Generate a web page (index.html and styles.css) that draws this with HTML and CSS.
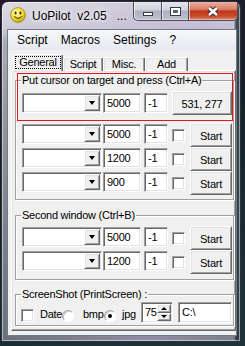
FILE: index.html
```html
<!DOCTYPE html>
<html lang="en">
<head>
  <meta charset="UTF-8">
  <meta name="viewport" content="width=device-width, initial-scale=1.0">
  <title>UoPilot v2.05</title>
  <link rel="stylesheet" href="styles.css">
</head>
<body>
  <div class="window">
    <!-- title bar -->
    <div class="titlebar">
      <svg class="app-icon" viewBox="0 0 16 16">
        <defs>
          <radialGradient id="face" cx="40%" cy="35%" r="65%">
            <stop offset="0" stop-color="#fffbb8"/>
            <stop offset=".6" stop-color="#f4de36"/>
            <stop offset="1" stop-color="#c6a400"/>
          </radialGradient>
        </defs>
        <circle cx="8" cy="8" r="7.4" fill="url(#face)" stroke="#a08810" stroke-width=".8"/>
        <ellipse cx="5.6" cy="6" rx="1" ry="1.4" fill="#222"/>
        <ellipse cx="10.4" cy="6" rx="1" ry="1.4" fill="#222"/>
        <path d="M4.2 9.4 Q8 13.2 11.8 9.4" fill="none" stroke="#222" stroke-width="1"/>
      </svg>
      <span class="title">UoPilot  v2.05   ...</span>
      <div class="caption">
        <span class="cbtn cbtn-min"><i></i></span>
        <span class="cbtn cbtn-max"><i></i></span>
        <span class="cbtn cbtn-close">
          <svg width="14" height="11" viewBox="0 0 14 11">
            <path d="M3 2 L11 9 M11 2 L3 9" stroke="#4a2620" stroke-width="4.6" fill="none"/>
            <path d="M3 2 L11 9 M11 2 L3 9" stroke="#fff" stroke-width="2.6" fill="none"/>
          </svg>
        </span>
      </div>
    </div>

    <div class="client">
      <div class="menubar">
        <span class="menu-item">Script</span>
        <span class="menu-item">Macros</span>
        <span class="menu-item">Settings</span>
        <span class="menu-item">?</span>
      </div>

      <div class="tabs">
        <span class="tab tab-active" style="width: 50px"><span class="focus">General</span></span>
        <span class="tab" style="width: 40px">Script</span>
        <span class="tab" style="width: 42px">Misc.</span>
        <span class="tab" style="width: 43px">Add</span>
      </div>

      <div class="panel">
        <div class="mark"></div>

        <fieldset class="group group-main">
          <legend>Put cursor on target and press (Ctrl+A)</legend>
          <div class="row row-target">
            <div class="combo sunken"><span class="drop raised"><b></b></span></div>
            <div class="edit sunken edit-time">5000</div>
            <div class="edit sunken edit-num">-1</div>
            <div class="btn raised btn-coords">531, 277</div>
          </div>
          <div class="row">
            <div class="combo sunken"><span class="drop raised"><b></b></span></div>
            <div class="edit sunken edit-time">5000</div>
            <div class="edit sunken edit-num">-1</div>
            <div class="check sunken"></div>
            <div class="btn raised btn-start">Start</div>
          </div>
          <div class="row">
            <div class="combo sunken"><span class="drop raised"><b></b></span></div>
            <div class="edit sunken edit-time">1200</div>
            <div class="edit sunken edit-num">-1</div>
            <div class="check sunken"></div>
            <div class="btn raised btn-start">Start</div>
          </div>
          <div class="row">
            <div class="combo sunken"><span class="drop raised"><b></b></span></div>
            <div class="edit sunken edit-time">900</div>
            <div class="edit sunken edit-num">-1</div>
            <div class="check sunken"></div>
            <div class="btn raised btn-start">Start</div>
          </div>
        </fieldset>

        <fieldset class="group group-second">
          <legend>Second window (Ctrl+B)</legend>
          <div class="row">
            <div class="combo sunken"><span class="drop raised"><b></b></span></div>
            <div class="edit sunken edit-time">5000</div>
            <div class="edit sunken edit-num">-1</div>
            <div class="check sunken"></div>
            <div class="btn raised btn-start">Start</div>
          </div>
          <div class="row">
            <div class="combo sunken"><span class="drop raised"><b></b></span></div>
            <div class="edit sunken edit-time">1200</div>
            <div class="edit sunken edit-num">-1</div>
            <div class="check sunken"></div>
            <div class="btn raised btn-start">Start</div>
          </div>
        </fieldset>

        <fieldset class="group group-shot">
          <legend>ScreenShot (PrintScreen) :</legend>
          <div class="shot-row">
            <div class="check sunken shot-check"></div>
            <span class="opt opt-date">Date</span>
            <span class="radio"></span>
            <span class="opt opt-bmp">bmp</span>
            <span class="radio radio-on"></span>
            <span class="opt opt-jpg">jpg</span>
            <div class="spin sunken">
              <span class="spin-value">75</span>
              <span class="updown">
                <span class="raised arrow-up"><b></b></span>
                <span class="raised arrow-down"><b></b></span>
              </span>
            </div>
            <div class="edit sunken edit-path">C:\</div>
          </div>
        </fieldset>
      </div>
    </div>
  </div>
</body>
</html>
```

FILE: styles.css
```css
* {
  box-sizing: border-box;
}

body {
  margin: 0;
  width: 245px;
  height: 346px;
  overflow: hidden;
  background: linear-gradient(160deg, #24182c 0%, #14222a 45%, #1e343a 100%);
  font-family: "Liberation Sans", Arial, sans-serif;
}

/* window frame (aero glass) */
.window {
  display: flex;
  flex-direction: column;
  width: 240px;
  height: 341px;
  margin: 1px 0 0 1px;
  padding: 0 4px 6px 6px;
  border: 1px solid #2b3038;
  border-radius: 7px 7px 0 0;
  background:
    linear-gradient(to right, transparent 232px, rgba(28, 44, 50, .8) 234px),
    linear-gradient(100deg, rgba(218, 218, 225, 0) 0%, rgba(190, 176, 210, .55) 70%, rgba(200, 192, 214, .3) 100%),
    linear-gradient(#dcdbe3 0, #d0ccd9 26px, #a9aab4 40px, #8c9199 130px, #59646c 100%);
  box-shadow: inset 0 0 0 1px rgba(255, 255, 255, .5);
}

.titlebar {
  display: flex;
  align-items: flex-start;
  height: 28px;
  flex: none;
}

.app-icon {
  width: 16px;
  height: 16px;
  margin: 5px 0 0 2px;
}

.title {
  margin: 6px 0 0 6px;
  font-size: 12px;
  line-height: 16px;
  color: #000;
  white-space: pre;
  text-shadow: 0 0 4px #fff, 0 0 8px #fff;
}

.caption {
  display: flex;
  height: 19px;
  margin: 0 -2px 0 auto;
}

.cbtn {
  display: flex;
  align-items: center;
  justify-content: center;
  height: 19px;
  border: 1px solid #474d5a;
  border-top: none;
  border-left: none;
  box-shadow: inset 1px 0 0 rgba(255, 255, 255, .6), inset 0 -1px 0 rgba(255, 255, 255, .4);
}

.cbtn-min {
  width: 29px;
  border-left: 1px solid #474d5a;
  border-radius: 0 0 0 5px;
  background: linear-gradient(#e6e6ec, #cfd0da 45%, #aeb0bf 50%, #c0c2cf 100%);
}

.cbtn-max {
  width: 27px;
  background: linear-gradient(#e6e6ec, #cfd0da 45%, #aeb0bf 50%, #c0c2cf 100%);
}

.cbtn-close {
  width: 49px;
  border-radius: 0 0 5px 0;
  background: linear-gradient(#eab0a2, #d87a63 42%, #c23518 50%, #c94a2c 78%, #e0896a 100%);
}

.cbtn-min i {
  width: 10px;
  height: 4px;
  margin-top: 5px;
  background: #fff;
  border: 1px solid #343a48;
}

.cbtn-max i {
  width: 11px;
  height: 9px;
  border: 1px solid #343a48;
  background: #5d6373;
  box-shadow: inset 0 0 0 2px #fff;
}

/* client area */
.client {
  flex: 1;
  display: flex;
  flex-direction: column;
  background: #f0f0f0;
  box-shadow: 0 0 0 1px #6f7a88;
  font-size: 11px;
  letter-spacing: -.25px;
  color: #000;
}

.menubar {
  display: flex;
  height: 20px;
  padding: 1px 0 0 2.5px;
  background: linear-gradient(#f7f8fb, #e6e9f0);
  letter-spacing: 0;
}

.menu-item {
  padding: 0 6.5px;
  font-size: 12px;
  line-height: 19px;
}

/* tabs */
.tabs {
  position: relative;
  z-index: 1;
  display: flex;
  align-items: flex-end;
  height: 17px;
  margin: 4px 0 -1px 5px;
}

.tab {
  height: 14px;
  border: 1px solid #fff;
  border-right-color: #696969;
  border-bottom: none;
  border-radius: 2px 2px 0 0;
  box-shadow: inset -1px 0 0 #a0a0a0, inset 1px 1px 0 #e3e3e3;
  line-height: 12px;
  text-align: center;
}

.tab-active {
  height: 17px;
  padding-top: 1px;
  background: #f0f0f0;
}

.focus {
  display: block;
  height: 13px;
  margin: 0 1px;
  border: 1px dotted #000;
  line-height: 11px;
}

.panel {
  position: relative;
  flex: 1;
  margin: 0 0 4px 3px;
  padding: 3px 1px 0 3px;
  border: 1px solid;
  border-color: #fff #696969 #696969 #fff;
  box-shadow: inset -1px -1px 0 #a0a0a0, inset 1px 1px 0 #e3e3e3;
}

/* red marker around the first row */
.mark {
  position: absolute;
  left: 5px;
  top: 2px;
  width: 216px;
  height: 48px;
  border: 1px solid #e3151b;
}

.group {
  margin: 0;
  min-width: 0;
  padding: 4px 1px 4px 6px;
  border: 1px solid #a0a0a0;
  box-shadow: 1px 1px 0 #fff, inset 1px 1px 0 #fff;
}

.group legend {
  margin-left: -1px;
  padding: 0 1px;
  line-height: 13px;
  background: #f0f0f0;
}

.group-second {
  margin-top: 9px;
  padding-bottom: 5px;
}

.group-shot {
  margin-top: 8px;
  padding-top: 1px;
  padding-bottom: 2px;
}

/* 3d edges */
.sunken {
  background: #fff;
  border: 1px solid;
  border-color: #a0a0a0 #fff #fff #a0a0a0;
  box-shadow: inset 1px 1px 0 #696969, inset -1px -1px 0 #e3e3e3;
}

.raised {
  background: #f0f0f0;
  border: 1px solid;
  border-color: #fff #696969 #696969 #fff;
  box-shadow: inset 1px 1px 0 #e3e3e3, inset -1px -1px 0 #a0a0a0;
}

/* rows */
.row {
  display: flex;
  align-items: flex-start;
  height: 24px;
}

.row-target {
  margin-bottom: 8px;
}

.combo {
  display: flex;
  justify-content: flex-end;
  width: 80px;
  height: 20px;
  margin-top: 1px;
  padding: 1px;
}

.row-target .combo,
.row-target .edit {
  margin-top: 2px;
}

.drop {
  display: flex;
  align-items: center;
  justify-content: center;
  width: 16px;
  height: 16px;
}

.drop b {
  border-left: 3.5px solid transparent;
  border-right: 3.5px solid transparent;
  border-top: 4px solid #000;
}

.edit {
  height: 20px;
  margin-top: 1px;
  padding: 2px 0 0 3px;
  line-height: 14px;
  white-space: nowrap;
}

.edit-time {
  width: 38px;
  margin-left: 1px;
}

.edit-num {
  width: 24px;
  margin-left: 3px;
}

.check {
  width: 13px;
  height: 13px;
  margin: 6px 0 0 4px;
}

.btn {
  display: flex;
  align-items: center;
  justify-content: center;
  height: 24px;
  padding-top: 2px;
  white-space: nowrap;
}

.btn-coords {
  width: 60px;
  margin-left: 4px;
}

.btn-start {
  width: 42px;
  margin-left: 5px;
}

/* screenshot row */
.shot-row {
  display: flex;
  align-items: flex-end;
  height: 21px;
}

.shot-check {
  margin: 0 0 1px -1px;
}

.opt {
  line-height: 13px;
  margin-bottom: 2px;
  white-space: nowrap;
}

.opt-date {
  width: 22px;
  margin-left: 6px;
}

.opt-bmp {
  width: 21px;
  margin-left: 9px;
}

.opt-jpg {
  width: 16px;
  margin-left: 6px;
}

.radio {
  display: flex;
  align-items: center;
  justify-content: center;
  width: 12px;
  height: 12px;
  margin-bottom: 1px;
  border-radius: 50%;
  border: 1px solid;
  border-color: #a8a8a8 #fff #fff #a8a8a8;
  background: #fff;
  box-shadow: inset 1px 1px 0 #c8c8c8;
}

.radio-on::after {
  content: "";
  width: 4px;
  height: 4px;
  border-radius: 50%;
  background: #000;
}

.spin {
  display: flex;
  justify-content: space-between;
  width: 32px;
  height: 21px;
  margin-left: 3px;
  padding: 1px 1px 1px 0;
}

.spin-value {
  padding: 1px 0 0 3px;
  line-height: 14px;
}

.updown {
  display: flex;
  flex-direction: column;
  width: 14px;
}

.updown > span {
  flex: 1;
  display: flex;
  align-items: center;
  justify-content: center;
}

.arrow-up b {
  border-left: 3px solid transparent;
  border-right: 3px solid transparent;
  border-bottom: 3px solid #000;
}

.arrow-down b {
  border-left: 3px solid transparent;
  border-right: 3px solid transparent;
  border-top: 3px solid #000;
}

.edit-path {
  width: 54px;
  height: 21px;
  margin: 0 0 0 5px;
}
```
